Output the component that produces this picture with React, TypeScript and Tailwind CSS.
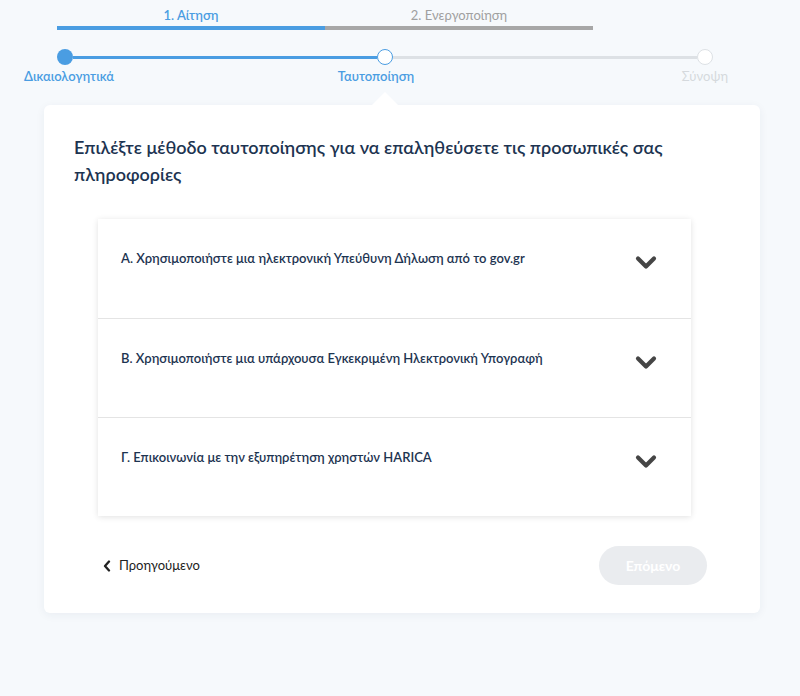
import React from "react";

const items = [
  "Α. Χρησιμοποιήστε μια ηλεκτρονική Υπεύθυνη Δήλωση από το gov.gr",
  "Β. Χρησιμοποιήστε μια υπάρχουσα Εγκεκριμένη Ηλεκτρονική Υπογραφή",
  "Γ. Επικοινωνία με την εξυπηρέτηση χρηστών HARICA",
];

function ChevronDown() {
  return (
    <svg width="22" height="15" viewBox="0 0 22 15" fill="none">
      <path d="M3 3.5 L11 11.5 L19 3.5" stroke="#454545" strokeWidth="4.2" strokeLinecap="round" strokeLinejoin="round" />
    </svg>
  );
}

export default function App() {
  return (
    <div className="min-h-[696px] w-[800px] bg-[#f6f9fc] pb-10" style={{ fontFamily: 'Lato, "Noto Sans", sans-serif' }}>
      {/* application phases */}
      <div className="ml-[57px] flex w-[536px] pt-[6px]">
        <div className="flex-1">
          <div className="text-center text-[13px] leading-[18px] font-semibold text-[#4a9de2]">1. Αίτηση</div>
          <div className="mt-[2px] h-[4px] bg-[#4a9de2]" />
        </div>
        <div className="flex-1">
          <div className="text-center text-[13px] leading-[18px] text-[#a0a0a0]">2. Ενεργοποίηση</div>
          <div className="mt-[2px] h-[4px] bg-[#a7a7a7]" />
        </div>
      </div>

      {/* stepper */}
      <div className="mt-[19px] ml-[57px] flex w-[656px] items-center">
        <div className="h-4 w-4 rounded-full bg-[#4a9de2]" />
        <div className="h-[3px] flex-1 bg-[#4a9de2]" />
        <div className="h-4 w-4 rounded-full border-[1.5px] border-[#4a9de2] bg-white" />
        <div className="h-[3px] flex-1 bg-[#dde1e5]" />
        <div className="h-4 w-4 rounded-full border-[1.5px] border-[#dde1e5] bg-white" />
      </div>
      <div className="ml-[24px] mt-[3px] grid w-[704px] grid-cols-3 text-[13px] leading-4 font-semibold">
        <span className="text-left text-[#4a9de2]">Δικαιολογητικά</span>
        <span className="text-center text-[#4a9de2]">Ταυτοποίηση</span>
        <span className="text-right font-normal text-[#d5d9dd]">Σύνοψη</span>
      </div>

      {/* card */}
      <div className="relative ml-[44px] mt-[21px] w-[716px] rounded-md bg-white px-[30px] pt-[29px] pb-[28px] shadow-[0_2px_10px_rgba(30,50,80,0.06)]">
        <div className="absolute left-[328px] top-[-13px] h-0 w-0 border-x-[13px] border-b-[13px] border-x-transparent border-b-white" />
        <h1 className="text-[18px] leading-[27px] font-semibold text-[#1d3451]">
          Επιλέξτε μέθοδο ταυτοποίησης για να επαληθεύσετε τις προσωπικές σας πληροφορίες
        </h1>

        <div className="ml-[24px] mt-[31px] w-[593px] bg-white shadow-[0_1px_6px_rgba(0,0,0,0.12)]">
          {items.map((item, i) => (
            <div key={i} className={`flex h-[99px] items-start justify-between pt-[30px] pl-[23px] pr-[34px] ${i > 0 ? "border-t border-[#e4e4e4]" : ""}`}>
              <span className="text-[13px] leading-[18px] font-semibold text-[#1d3451]">{item}</span>
              <span className="mt-[6px]"><ChevronDown /></span>
            </div>
          ))}
        </div>

        <div className="mt-[30px] flex items-center justify-between">
          <button className="ml-[29px] flex items-center gap-[8px] text-[13px] text-[#222]">
            <svg width="8" height="12" viewBox="0 0 8 12" fill="none">
              <path d="M6 1.5 L2 6 L6 10.5" stroke="#222" strokeWidth="2.3" strokeLinecap="round" strokeLinejoin="round" />
            </svg>
            Προηγούμενο
          </button>
          <button className="mr-[23px] h-[39px] w-[108px] rounded-full bg-[#eaecef] text-[14px] font-bold text-white">
            Επόμενο
          </button>
        </div>
      </div>
    </div>
  );
}
